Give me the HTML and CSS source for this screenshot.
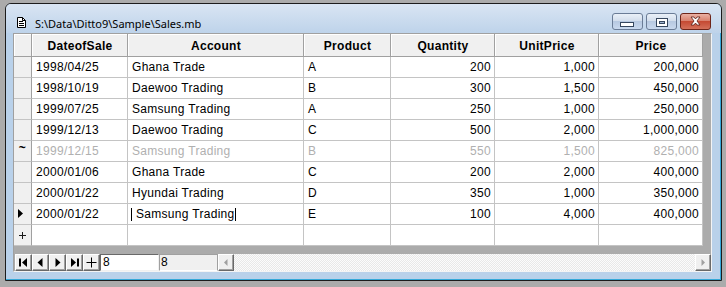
FILE: index.html
```html
<!DOCTYPE html>
<html lang="en">
  <head>
    <meta charset="UTF-8" />
    <title>Sales.mb</title>
    <link rel="stylesheet" href="styles.css">
  </head>
  <body>
    <div class="window">
      <div class="titlebar">
        <svg class="doc-icon" width="9" height="11" viewBox="0 0 9 11">
          <path d="M0.5 0.5h5l3 3v7h-8z" fill="#fff" stroke="#000" />
          <path d="M5.5 0.5v3h3" fill="none" stroke="#000" />
          <path d="M2 4.5h4M2 6.5h5M2 8.5h5" stroke="#000" />
        </svg>
        <span class="title">S:\Data\Ditto9\Sample\Sales.mb</span>
        <div class="caption">
          <div class="cap-btn">
            <svg width="29" height="15" viewBox="0 0 29 15">
              <rect x="7.5" y="8.5" width="13" height="4" fill="#fff" stroke="#36475e" />
            </svg>
          </div>
          <div class="cap-btn">
            <svg width="29" height="15" viewBox="0 0 29 15">
              <rect x="9.5" y="4.5" width="11" height="8" fill="#fff" stroke="#36475e" />
              <rect x="12.5" y="7.5" width="5" height="2" fill="#9fb4d0" stroke="#36475e" />
            </svg>
          </div>
          <div class="cap-btn close">
            <svg width="29" height="15" viewBox="0 0 29 15">
              <path d="M10 3h3l1.5 2l1.5-2h3l-3 4l3 4h-3l-1.5-2l-1.5 2h-3l3-4z" fill="#fff" stroke="#5a1d14" stroke-width="0.8" />
            </svg>
          </div>
        </div>
      </div>

      <div class="client">
        <div class="grid">
          <div class="row hdr-row">
            <div class="sel"></div>
            <div>DateofSale</div>
            <div>Account</div>
            <div>Product</div>
            <div>Quantity</div>
            <div>UnitPrice</div>
            <div>Price</div>
          </div>
          <div class="row">
            <div class="sel"></div>
            <div>1998/04/25</div>
            <div>Ghana Trade</div>
            <div>A</div>
            <div class="num">200</div>
            <div class="num">1,000</div>
            <div class="num">200,000</div>
          </div>
          <div class="row">
            <div class="sel"></div>
            <div>1998/10/19</div>
            <div>Daewoo Trading</div>
            <div>B</div>
            <div class="num">300</div>
            <div class="num">1,500</div>
            <div class="num">450,000</div>
          </div>
          <div class="row">
            <div class="sel"></div>
            <div>1999/07/25</div>
            <div>Samsung Trading</div>
            <div>A</div>
            <div class="num">250</div>
            <div class="num">1,000</div>
            <div class="num">250,000</div>
          </div>
          <div class="row">
            <div class="sel"></div>
            <div>1999/12/13</div>
            <div>Daewoo Trading</div>
            <div>C</div>
            <div class="num">500</div>
            <div class="num">2,000</div>
            <div class="num">1,000,000</div>
          </div>
          <div class="row ghost">
            <div class="sel tilde">~</div>
            <div>1999/12/15</div>
            <div>Samsung Trading</div>
            <div>B</div>
            <div class="num">550</div>
            <div class="num">1,500</div>
            <div class="num">825,000</div>
          </div>
          <div class="row">
            <div class="sel"></div>
            <div>2000/01/06</div>
            <div>Ghana Trade</div>
            <div>C</div>
            <div class="num">200</div>
            <div class="num">2,000</div>
            <div class="num">400,000</div>
          </div>
          <div class="row">
            <div class="sel"></div>
            <div>2000/01/22</div>
            <div>Hyundai Trading</div>
            <div>D</div>
            <div class="num">350</div>
            <div class="num">1,000</div>
            <div class="num">350,000</div>
          </div>
          <div class="row">
            <div class="sel">
              <svg width="17" height="20" viewBox="0 0 17 20">
                <path d="M4 5v9l5-4.5z" fill="#000" />
              </svg>
            </div>
            <div>2000/01/22</div>
            <div class="editing"><span class="caret lead"></span>Samsung Trading<span class="caret"></span></div>
            <div>E</div>
            <div class="num">100</div>
            <div class="num">4,000</div>
            <div class="num">400,000</div>
          </div>
          <div class="row">
            <div class="sel">
              <svg width="17" height="20" viewBox="0 0 17 20">
                <path d="M5 10.5h7M8.5 7v7" stroke="#1a1a1a" />
              </svg>
            </div>
            <div></div>
            <div></div>
            <div></div>
            <div></div>
            <div></div>
            <div></div>
          </div>
        </div>

        <div class="navbar">
          <div class="nav-btn">
            <svg width="15" height="15" viewBox="0 0 15 15">
              <path d="M4 3.5v8" stroke="#000" stroke-width="2" />
              <path d="M11 3v9l-5-4.5z" fill="#000" />
            </svg>
          </div>
          <div class="nav-btn">
            <svg width="15" height="15" viewBox="0 0 15 15">
              <path d="M9.5 3v9l-5-4.5z" fill="#000" />
            </svg>
          </div>
          <div class="nav-btn">
            <svg width="15" height="15" viewBox="0 0 15 15">
              <path d="M5.5 3v9l5-4.5z" fill="#000" />
            </svg>
          </div>
          <div class="nav-btn">
            <svg width="15" height="15" viewBox="0 0 15 15">
              <path d="M4 3v9l5-4.5z" fill="#000" />
              <path d="M11 3.5v8" stroke="#000" stroke-width="2" />
            </svg>
          </div>
          <div class="nav-btn">
            <svg width="15" height="15" viewBox="0 0 15 15">
              <path d="M2.5 7.5h10M7.5 2.5v10" stroke="#000" />
            </svg>
          </div>
          <div class="rec-box">8</div>
          <div class="rec-count">8</div>
          <div class="hscroll">
            <div class="sb-btn">
              <svg width="14" height="15" viewBox="0 0 14 15">
                <path d="M8.5 4v7l-3.5-3.5z" fill="#a0a0a0" />
              </svg>
            </div>
            <div class="sb-track"></div>
            <div class="sb-btn">
              <svg width="14" height="15" viewBox="0 0 14 15">
                <path d="M5.5 4v7l3.5-3.5z" fill="#a0a0a0" />
              </svg>
            </div>
          </div>
        </div>
      </div>
    </div>
  </body>
</html>
```

FILE: styles.css
```css
* {
  box-sizing: border-box;
}
body {
  margin: 0;
  width: 726px;
  height: 287px;
  overflow: hidden;
  background: #ababab;
  font-family: "Liberation Sans", Arial, sans-serif;
  font-size: 12px;
  color: #000;
}
.window {
  margin: 3px 0 0 5px;
  width: 717px;
  height: 278px;
  border: 1px solid #1c1c1c;
  border-radius: 6px 6px 0 0;
  background: #b9d1ea;
  box-shadow: inset -1px -1px 0 #35a8d8;
  padding: 0 9px 8px 7px;
  display: flex;
  flex-direction: column;
}
.titlebar {
  height: 29px;
  display: flex;
  align-items: flex-start;
  margin: 0 -9px 0 -7px;
  padding: 0 10px 0 11px;
  border-radius: 5px 5px 0 0;
  background: linear-gradient(#d9e5f3, #bed3ea);
}
.doc-icon {
  margin-top: 13px;
}
.title {
  margin: 12px 0 0 9px;
  font-family: "Noto Sans", "Open Sans", sans-serif;
  font-size: 11px;
  line-height: 15px;
  color: #000;
}
.caption {
  margin-left: auto;
  margin-top: 9px;
  display: flex;
  gap: 3px;
}
.cap-btn {
  width: 31px;
  height: 17px;
  border: 1px solid #6a7c96;
  border-radius: 3px;
  background: linear-gradient(#e9f0f8 0%, #d3deec 45%, #b7c9e1 50%, #c9d9ee 100%);
}
.cap-btn svg {
  display: block;
}
.cap-btn.close {
  border-color: #6e2418;
  background: linear-gradient(#eab1a4 0%, #d9826f 45%, #c54a33 50%, #d4705a 100%);
}
.client {
  height: 239px;
  background: #ababab;
  border-top: 1px solid #a0a0a0;
  border-left: 1px solid #a0a0a0;
  border-right: 1px solid #f4f4f4;
  border-bottom: 1px solid #f4f4f4;
}
.grid {
  width: 689px;
}
.row {
  display: grid;
  grid-template-columns: 18px 96px 176px 87px 104px 104px 104px;
  height: 21px;
}
.row > div {
  background: #fff;
  border-right: 1px solid #c4c4c4;
  border-bottom: 1px solid #c4c4c4;
  padding: 0 3px 0 4px;
  line-height: 20px;
  letter-spacing: 0.3px;
  white-space: nowrap;
  overflow: hidden;
}
.row .num {
  text-align: right;
}
.row .sel {
  background: #f0f0f0;
  border-right-color: #a0a0a0;
  padding: 0;
}
.row .sel svg {
  display: block;
}
.row .tilde {
  font-weight: bold;
  color: #000;
  text-align: center;
  line-height: 14px;
}
.hdr-row {
  height: 23px;
}
.hdr-row > div {
  background: #f0f0f0;
  border-right-color: #a0a0a0;
  border-bottom-color: #a0a0a0;
  box-shadow: inset 1px 1px 0 #fff;
  font-weight: bold;
  text-align: center;
  padding-top: 3px;
  line-height: 19px;
}
.ghost > div {
  color: #b0b0b0;
}
.editing {
  padding-left: 3px !important;
}
.caret {
  display: inline-block;
  width: 1px;
  height: 13px;
  background: #000;
  vertical-align: -3px;
}
.caret.lead {
  margin-right: 4px;
}
.navbar {
  margin: 8px 0 0 1px;
  height: 17px;
  display: flex;
}
.nav-btn,
.sb-btn {
  width: 17px;
  height: 17px;
  background: #f0f0f0;
  border: 1px solid;
  border-color: #fff #696969 #696969 #fff;
  box-shadow: inset -1px -1px 0 #a0a0a0;
}
.nav-btn svg,
.sb-btn svg {
  display: block;
}
.rec-box {
  width: 59px;
  background: #fff;
  border: 1px solid;
  border-color: #696969 #f0f0f0 #f0f0f0 #696969;
  padding-left: 2px;
  line-height: 15px;
}
.rec-count {
  width: 59px;
  background: #f0f0f0;
  border: 1px solid;
  border-color: #a0a0a0 #a0a0a0 #fff #a0a0a0;
  padding-left: 1px;
  line-height: 15px;
}
.hscroll {
  flex: 1;
  display: flex;
}
.sb-btn {
  width: 16px;
}
.sb-track {
  flex: 1;
  background: repeating-conic-gradient(#e8e8e8 0 25%, #fbfbfb 0 50%) 0 0 / 2px 2px;
}
```
